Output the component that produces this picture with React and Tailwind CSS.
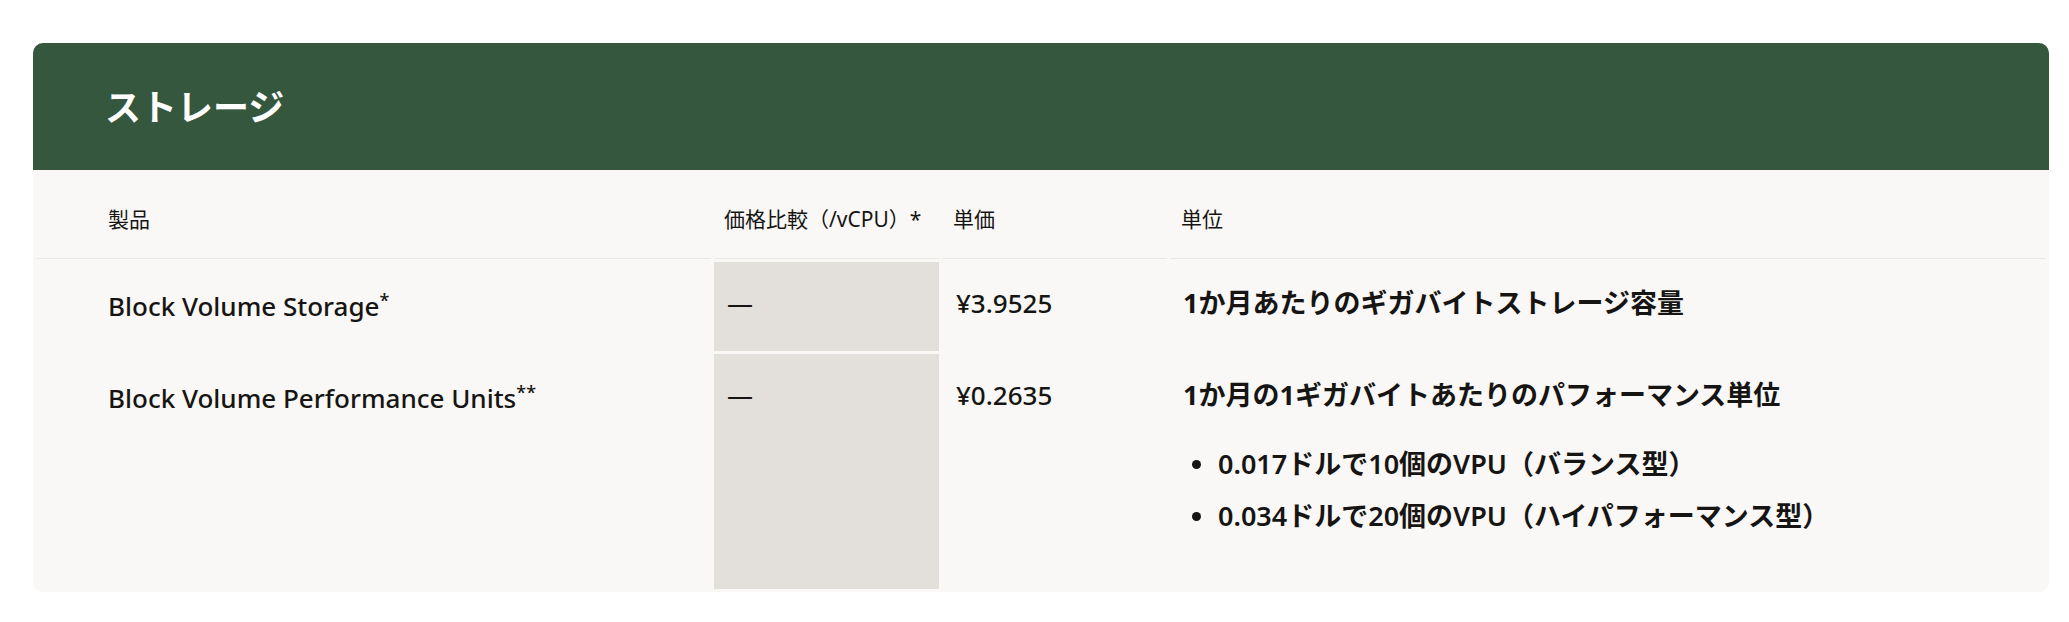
const rows = [
  {
    name: "Block Volume Storage",
    mark: "*",
    compare: "—",
    price: "¥3.9525",
    unit: "1か月あたりのギガバイトストレージ容量",
    notes: [],
    height: "h-[89px]",
  },
  {
    name: "Block Volume Performance Units",
    mark: "**",
    compare: "—",
    price: "¥0.2635",
    unit: "1か月の1ギガバイトあたりのパフォーマンス単位",
    notes: ["0.017ドルで10個のVPU（バランス型）", "0.034ドルで20個のVPU（ハイパフォーマンス型）"],
    height: "h-[235px]",
  },
]

export default function App() {
  return (
    <div className="min-h-[622px] bg-white pt-[43px] font-['Noto_Sans','Noto_Sans_CJK_JP',sans-serif] text-[#161513]">
      <div className="ml-[33px] w-[2016px] overflow-hidden rounded-[10px] bg-[#f9f8f6]">
        <div className="flex h-[127px] items-center bg-[#34573d] pl-[72px] pt-[3px]">
          <h2 className="text-[36px] font-bold leading-none text-white">ストレージ</h2>
        </div>

        <table className="w-full table-fixed border-separate border-spacing-[3px]">
          <colgroup>
            <col className="w-[675px]" />
            <col className="w-[225px]" />
            <col className="w-[225px]" />
            <col />
          </colgroup>
          <thead>
            <tr className="text-left text-[21px] font-normal leading-[30px]">
              <th className="border-b border-[#ebe9e5] pb-[24px] pl-[72px] pt-[31px] font-normal">製品</th>
              <th className="whitespace-nowrap border-b border-[#ebe9e5] pb-[24px] pl-[10px] pt-[31px] font-normal">
                価格比較（/vCPU）*
              </th>
              <th className="border-b border-[#ebe9e5] pb-[24px] pl-[11px] pt-[31px] font-normal">単価</th>
              <th className="border-b border-[#ebe9e5] pb-[24px] pl-[11px] pt-[31px] font-normal">単位</th>
            </tr>
          </thead>
          <tbody className="text-[26px] leading-[38px]">
            {rows.map((row) => (
              <tr key={row.name} className={row.height}>
                <td className="pl-[72px] pt-[25px] align-top font-medium">
                  {row.name}
                  <sup className="text-[18px]">{row.mark}</sup>
                </td>
                <td className="bg-[#e3e0db] pl-[13px] pt-[22px] align-top">{row.compare}</td>
                <td className="pl-[14px] pt-[22px] align-top font-medium">{row.price}</td>
                <td className="pl-[13px] pt-[22px] align-top text-[27px]">
                  <div className="font-bold">{row.unit}</div>
                  {row.notes.length > 0 && (
                    <ul className="mt-[31px] flex flex-col gap-[14px] font-semibold">
                      {row.notes.map((note) => (
                        <li key={note} className="flex items-center">
                          <span className="ml-[9px] mr-[17px] h-[9px] w-[9px] shrink-0 rounded-full bg-[#161513]" />
                          {note}
                        </li>
                      ))}
                    </ul>
                  )}
                </td>
              </tr>
            ))}
          </tbody>
        </table>
      </div>
    </div>
  )
}
